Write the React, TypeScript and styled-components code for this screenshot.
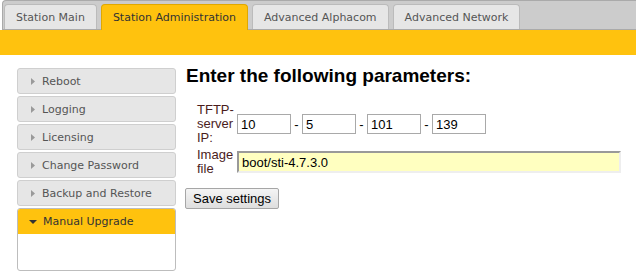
import React from 'react';
import styled, { createGlobalStyle } from 'styled-components';

const GlobalStyle = createGlobalStyle`
  html, body {
    margin: 0;
    padding: 0;
    background: #ffffff;
  }
`;

const Page = styled.div`
  width: 636px;
  height: 279px;
  overflow: hidden;
  font-family: 'Liberation Sans', Arial, sans-serif;
`;

const TabBar = styled.div`
  display: flex;
  align-items: flex-end;
  gap: 4px;
  height: 25px;
  padding: 3px 0 0 1px;
  margin-left: 2px;
  background: #cccccc;
  border-top: 1px solid #aaaaaa;
  border-left: 1px solid #aaaaaa;
  border-bottom: 1px solid #aaaaaa;
  border-top-left-radius: 4px;
`;

const Tab = styled.div<{ active?: boolean }>`
  position: relative;
  display: flex;
  align-items: center;
  padding: 0 11px;
  height: ${({ active }) => (active ? '26px' : '25px')};
  margin-bottom: ${({ active }) => (active ? '-1px' : '0')};
  box-sizing: border-box;
  border: 1px solid ${({ active }) => (active ? '#e0a800' : '#bbbbbb')};
  border-bottom: none;
  border-radius: 4px 4px 0 0;
  background: ${({ active }) => (active ? '#ffc20e' : '#e6e6e6')};
  color: ${({ active }) => (active ? '#333333' : '#555555')};
  font-family: 'DejaVu Sans', Verdana, sans-serif;
  font-size: 11px;
  white-space: nowrap;
`;

const Band = styled.div`
  height: 25px;
  background: #ffc20e;
`;

const Body = styled.div`
  display: flex;
  padding: 13px 0 0 17px;
  gap: 10px;
`;

const Sidebar = styled.div`
  display: flex;
  flex-direction: column;
  gap: 2px;
  width: 159px;
  flex: none;
`;

const MenuItem = styled.div`
  display: flex;
  align-items: center;
  height: 26px;
  box-sizing: border-box;
  padding-left: 13px;
  border: 1px solid #cfcfcf;
  border-radius: 3px;
  background: #e6e6e6;
  color: #555555;
  font-family: 'DejaVu Sans', Verdana, sans-serif;
  font-size: 11px;
`;

const ActiveGroup = styled.div`
  border: 1px solid #bdbdbd;
  border-radius: 3px;
  overflow: hidden;
  background: #ffffff;
`;

const ActiveHeader = styled.div`
  display: flex;
  align-items: center;
  height: 25px;
  padding-left: 11px;
  background: #ffc20e;
  color: #333333;
  font-family: 'DejaVu Sans', Verdana, sans-serif;
  font-size: 11px;
`;

const ActivePanel = styled.div`
  height: 36px;
`;

const Arrow = styled.svg<{ gap: number }>`
  flex: none;
  margin-right: ${({ gap }) => gap}px;
`;

const Main = styled.div`
  display: flex;
  flex-direction: column;
  align-items: flex-start;
`;

const Heading = styled.h1`
  margin: -3px 0 0 0;
  font-size: 19px;
  line-height: 22px;
  font-weight: bold;
  color: #000000;
`;

const FormTable = styled.table`
  margin: 13px 0 0 8px;
  border-spacing: 3px;
`;

const Label = styled.td`
  width: 37px;
  padding: 0;
  font-size: 13px;
  line-height: 14px;
  color: #4a1c1c;
  vertical-align: middle;
`;

const Field = styled.td`
  padding: 0;
  vertical-align: middle;
  font-size: 13px;
  color: #000000;
`;

const IpInput = styled.input`
  width: 54px;
  height: 20px;
  box-sizing: border-box;
  padding: 0 3px;
  border: 1px solid #a9a9a9;
  font-family: 'Liberation Sans', Arial, sans-serif;
  font-size: 13px;
  color: #000000;
  background: #ffffff;
`;

const Dash = styled.span`
  display: inline-block;
  width: 11px;
  text-align: center;
`;

const FileInput = styled.input`
  width: 384px;
  height: 22px;
  box-sizing: border-box;
  padding: 0 3px;
  border: 2px solid;
  border-color: #999999 #eeeeee #eeeeee #999999;
  background: #ffffc0;
  font-family: 'Liberation Sans', Arial, sans-serif;
  font-size: 13px;
  color: #000000;
`;

const SaveButton = styled.button`
  margin: 9px 0 0 -1px;
  height: 21px;
  padding: 0 7px;
  border: 1px solid #a6a6a6;
  border-radius: 2px;
  background: linear-gradient(#f4f4f4, #dedede);
  font-family: 'Liberation Sans', Arial, sans-serif;
  font-size: 13px;
  color: #000000;
`;

const RightArrow = () => (
  <Arrow gap={7} width="4" height="7" viewBox="0 0 4 7">
    <path d="M0 0 L4 3.5 L0 7 Z" fill="#9a9a9a" />
  </Arrow>
);

const DownArrow = () => (
  <Arrow gap={6} width="8" height="4" viewBox="0 0 8 4">
    <path d="M0 0 L8 0 L4 4 Z" fill="#333333" />
  </Arrow>
);

const tabs = ['Station Main', 'Station Administration', 'Advanced Alphacom', 'Advanced Network'];
const menu = ['Reboot', 'Logging', 'Licensing', 'Change Password', 'Backup and Restore'];
const ip = ['10', '5', '101', '139'];

const App: React.FC = () => (
  <Page>
    <GlobalStyle />
    <TabBar>
      {tabs.map((t) => (
        <Tab key={t} active={t === 'Station Administration'}>
          {t}
        </Tab>
      ))}
    </TabBar>
    <Band />
    <Body>
      <Sidebar>
        {menu.map((m) => (
          <MenuItem key={m}>
            <RightArrow />
            {m}
          </MenuItem>
        ))}
        <ActiveGroup>
          <ActiveHeader>
            <DownArrow />
            Manual Upgrade
          </ActiveHeader>
          <ActivePanel />
        </ActiveGroup>
      </Sidebar>
      <Main>
        <Heading>Enter the following parameters:</Heading>
        <FormTable>
          <tbody>
            <tr>
              <Label>TFTP-server IP:</Label>
              <Field>
                {ip.map((v, i) => (
                  <React.Fragment key={i}>
                    {i > 0 && <Dash>-</Dash>}
                    <IpInput defaultValue={v} />
                  </React.Fragment>
                ))}
              </Field>
            </tr>
            <tr>
              <Label>Image file</Label>
              <Field>
                <FileInput defaultValue="boot/sti-4.7.3.0" />
              </Field>
            </tr>
          </tbody>
        </FormTable>
        <SaveButton>Save settings</SaveButton>
      </Main>
    </Body>
  </Page>
);

export default App;
